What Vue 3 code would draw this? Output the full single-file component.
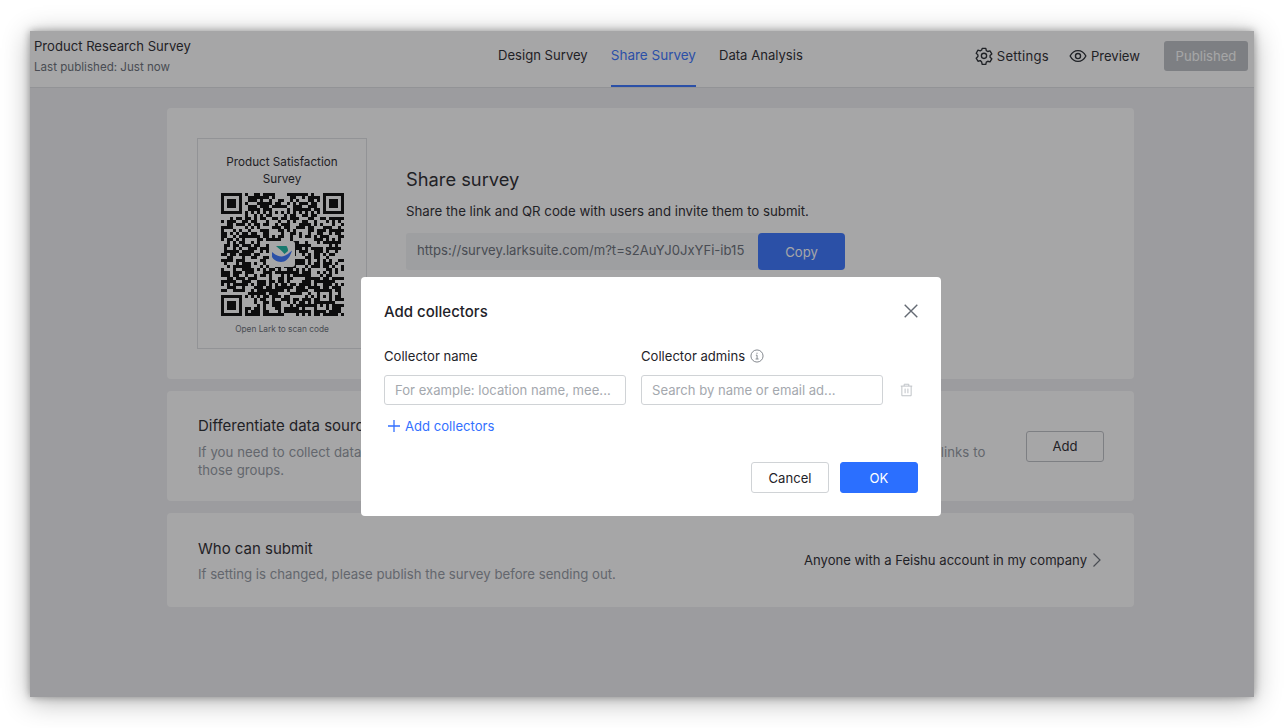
<script setup>
import { computed } from 'vue'

const tabs = ['Design Survey', 'Share Survey', 'Data Analysis']
const SIZE = 41

function isFinder(x, y) {
  const inBox = (bx, by) => x >= bx && x < bx + 8 && y >= by && y < by + 8
  return inBox(0, 0) || inBox(SIZE - 8, 0) || inBox(0, SIZE - 8)
}

// not a real encoding, just modules that look like the code in the picture
const qrPath = computed(() => {
  let seed = 20240611
  const next = () => {
    seed = (seed * 1664525 + 1013904223) % 4294967296
    return seed / 4294967296
  }
  let d = ''
  const add = (x, y, w = 1, h = 1) => {
    d += `M${x} ${y}h${w}v${h}h-${w}z`
  }
  for (let y = 0; y < SIZE; y++) {
    for (let x = 0; x < SIZE; x++) {
      const random = next()
      if (isFinder(x, y)) continue
      if (x >= 32 && x <= 36 && y >= 32 && y <= 36) continue
      if (x === 6 || y === 6) {
        if ((x + y) % 2 === 0) add(x, y)
      } else if (random > 0.44) {
        add(x, y)
      }
    }
  }
  return d
})

const finders = [
  [0, 0],
  [34, 0],
  [0, 34]
]
</script>

<template>
  <div class="desktop">
    <div class="window">
      <header class="topbar">
        <div class="doc">
          <div class="doc__title">Product Research Survey</div>
          <div class="doc__meta">Last published: Just now</div>
        </div>
        <nav class="tabs">
          <span
            v-for="tab in tabs"
            :key="tab"
            class="tab"
            :class="{ 'tab--active': tab === 'Share Survey' }"
          >{{ tab }}</span>
        </nav>
        <div class="tools">
          <span class="tool tool--settings">
            <svg width="18" height="18" viewBox="0 0 24 24" fill="none" stroke="currentColor" stroke-width="1.8" stroke-linejoin="round">
              <path d="M9.6 1.8h4.8l.7 3.1 1.9 1.1 3-.9 2.4 4.1-2.3 2.2v2.2l2.3 2.2-2.4 4.1-3-.9-1.9 1.1-.7 3.1H9.6l-.7-3.1L7 18.1l-3 .9-2.4-4.1 2.3-2.2v-2.2L1.6 8.3 4 4.2l3 .9 1.9-1.1z" />
              <circle cx="12" cy="11.8" r="3.5" />
            </svg>
            Settings
          </span>
          <span class="tool tool--preview">
            <svg width="18" height="18" viewBox="0 0 24 24" fill="none" stroke="currentColor" stroke-width="1.8">
              <path d="M1.5 12C4 7.2 7.6 4.8 12 4.8s8 2.4 10.5 7.2c-2.5 4.8-6.1 7.2-10.5 7.2S4 16.8 1.5 12z" />
              <circle cx="12" cy="12" r="3.4" />
            </svg>
            Preview
          </span>
          <button type="button" class="published">Published</button>
        </div>
      </header>

      <main class="content">
        <section class="card card--share">
          <div class="qr-card">
            <div class="qr-card__title">Product Satisfaction Survey</div>
            <div class="qr">
              <svg width="123" height="123" viewBox="0 0 41 41" shape-rendering="crispEdges">
                <path :d="qrPath" fill="#000" />
                <g v-for="[x, y] in finders" :key="`${x}-${y}`">
                  <path :d="`M${x} ${y}h7v7h-7zM${x + 1} ${y + 1}v5h5v-5z`" fill="#000" fill-rule="evenodd" />
                  <rect :x="x + 2" :y="y + 2" width="3" height="3" fill="#000" />
                </g>
                <path d="M32 32h5v5h-5zM33 33v3h3v-3z" fill="#000" fill-rule="evenodd" />
                <rect x="34" y="34" width="1" height="1" fill="#000" />
              </svg>
              <span class="qr__logo">
                <svg width="20" height="18" viewBox="0 0 20 18">
                  <path d="M4 1h10.5c1 1.500 1.500 3 1.500 5l-3.500 3C10 6 7 3.500 4 1z" fill="#12b5a0" />
                  <path d="M0 7c3 2.500 6 4.500 9.500 4.500 3.500 0 6.500-2.500 10.500-6-1.500 6-5.500 11.500-11 11.500C4.500 17 1 14 0 12z" fill="#3370ff" />
                </svg>
              </span>
            </div>
            <div class="qr-card__hint">Open Lark to scan code</div>
          </div>
          <div class="share">
            <h2 class="share__title">Share survey</h2>
            <p class="share__text">Share the link and QR code with users and invite them to submit.</p>
            <div class="share__link">
              <span class="share__url">https://survey.larksuite.com/m?t=s2AuYJ0JxYFi-ib15</span>
              <button type="button" class="copy">Copy</button>
            </div>
          </div>
        </section>

        <section class="card card--row card--sources">
          <div class="row-text">
            <div class="row-title">Differentiate data sources</div>
            <div class="row-desc">If you need to collect data from different groups or channels, you can create multiple collectors and send out different links to those groups.</div>
          </div>
          <button type="button" class="add">Add</button>
        </section>

        <section class="card card--row card--submit">
          <div>
            <div class="row-title">Who can submit</div>
            <div class="row-desc">If setting is changed, please publish the survey before sending out.</div>
          </div>
          <div class="scope">
            Anyone with a Feishu account in my company
            <svg width="10" height="16" viewBox="0 0 10 16" fill="none" stroke="#646a73" stroke-width="1.2">
              <path d="M1.500 1.500 8 8l-6.500 6.500" />
            </svg>
          </div>
        </section>
      </main>

      <div class="overlay">
        <div class="modal" role="dialog" aria-modal="true">
          <div class="modal__head">
            <h3 class="modal__title">Add collectors</h3>
            <svg class="modal__close" width="14" height="14" viewBox="0 0 14 14" fill="none" stroke="currentColor" stroke-width="1.4">
              <path d="M.7.7l12.600 12.600M13.300.7.7 13.300" />
            </svg>
          </div>
          <div class="fields">
            <label class="field">
              <span class="field__label">Collector name</span>
              <input class="field__input" type="text" placeholder="For example: location name, mee...">
            </label>
            <label class="field">
              <span class="field__label">
                Collector admins
                <svg width="14" height="14" viewBox="0 0 15 15" fill="none" stroke="#7b8087" stroke-width="1">
                  <circle cx="7.500" cy="7.500" r="6.500" />
                  <path d="M6.300 6.600h1.300v4M6 10.700h3.200M7.500 4v1.200" />
                </svg>
              </span>
              <input class="field__input" type="text" placeholder="Search by name or email ad...">
            </label>
            <svg class="fields__trash" width="13" height="14" viewBox="0 0 14 14" fill="none" stroke="#bbbfc4" stroke-width="1">
              <path d="M.8 2.800h12.400M4.500 2.800V.8h5v2M2 2.800v10.400h10V2.800M5.500 5.500v5M8.500 5.500v5" />
            </svg>
          </div>
          <div class="add-more">
            <svg width="12" height="12" viewBox="0 0 12 12" fill="none" stroke="currentColor" stroke-width="1.3">
              <path d="M6 0v12M0 6h12" />
            </svg>
            Add collectors
          </div>
          <div class="modal__foot">
            <button type="button" class="btn">Cancel</button>
            <button type="button" class="btn btn--primary">OK</button>
          </div>
        </div>
      </div>
    </div>
  </div>
</template>

<style>
body {
  background: #fff;
}
</style>

<style scoped>
.desktop {
  height: 728px;
  padding: 31px 30px;
  box-sizing: border-box;
  overflow: hidden;
  background: #fff;
  font-family: Inter, "Noto Sans", sans-serif;
  font-size: 13.1px;
  color: #1f2329;
}

.window {
  position: relative;
  height: 666px;
  overflow: hidden;
  background: #efeff2;
}

.desktop::before {
  content: "";
  position: absolute;
  top: 31px;
  left: 30px;
  width: 1224px;
  height: 666px;
  box-shadow: 0 0 8px rgba(0, 0, 0, 0.35), 0 4px 26px rgba(0, 0, 0, 0.3);
}

.topbar {
  position: relative;
  display: flex;
  align-items: center;
  box-sizing: border-box;
  height: 57px;
  padding: 0 6px 6px 4px;
  border-bottom: 1px solid #dee0e3;
  background: #fff;
}

.doc__title {
  line-height: 20px;
}

.doc__meta {
  margin-top: 2px;
  font-size: 11.6px;
  line-height: 18px;
  color: #646a73;
}

.tabs {
  position: absolute;
  top: 0;
  left: 468px;
  display: flex;
  gap: 23px;
  height: 56px;
}

.tab {
  box-sizing: border-box;
  height: 56px;
  padding-top: 14px;
  line-height: 20px;
}

.tab--active {
  border-bottom: 2px solid #3370ff;
  color: #3370ff;
  font-size: 13.5px;
}

.tools {
  display: flex;
  align-items: center;
  margin-left: auto;
}

.tool {
  display: flex;
  align-items: center;
  gap: 4px;
  margin-right: 20px;
  line-height: 20px;
}

.tool--settings {
  letter-spacing: 0.25px;
}

.tool--preview {
  margin-right: 24px;
}

.published {
  width: 84px;
  height: 30px;
  padding: 0;
  border: 0;
  border-radius: 3px;
  background: #bbbfc4;
  color: #fff;
  font: inherit;
}

.content {
  display: flex;
  flex-direction: column;
  gap: 12px;
  padding: 20px 120px 0 137px;
}

.card {
  border-radius: 4px;
  background: #fff;
}

.card--share {
  display: flex;
  align-items: center;
  height: 271px;
  padding: 0 30px;
  box-sizing: border-box;
}

.qr-card {
  display: flex;
  flex-direction: column;
  align-items: center;
  box-sizing: border-box;
  width: 170px;
  height: 211px;
  padding-top: 15px;
  border: 1px solid #dee0e3;
}

.qr-card__title {
  width: 130px;
  font-size: 11.7px;
  line-height: 16.5px;
  text-align: center;
}

.qr {
  position: relative;
  width: 123px;
  height: 123px;
  margin-top: 6px;
}

.qr svg {
  display: block;
}

.qr__logo {
  position: absolute;
  top: 48px;
  left: 48px;
  display: flex;
  align-items: center;
  justify-content: center;
  width: 26px;
  height: 26px;
  border-radius: 3px;
  background: #fff;
}

.qr-card__hint {
  margin-top: 7px;
  font-size: 8.3px;
  line-height: 12px;
  color: #646a73;
}

.share {
  align-self: flex-start;
  margin: 58px 0 0 39px;
}

.share__title {
  margin: 0;
  font-size: 18.3px;
  font-weight: 400;
  line-height: 26px;
}

.share__text {
  margin: 9px 0 0;
  font-size: 13.25px;
  line-height: 20px;
}

.share__link {
  display: flex;
  align-items: center;
  width: 439px;
  height: 37px;
  margin-top: 12px;
  border-radius: 3px;
  background: #f2f3f5;
}

.share__url {
  flex: 1;
  padding: 0 0 4px 11px;
  color: #646a73;
  white-space: nowrap;
}

.copy {
  width: 87px;
  height: 37px;
  padding: 0;
  border: 0;
  border-radius: 4px;
  background: #3370ff;
  color: #fff;
  font: inherit;
}

.card--row {
  display: flex;
  align-items: center;
  justify-content: space-between;
  box-sizing: border-box;
  padding: 0 30px 0 31px;
}

.card--sources {
  height: 110px;
}

.card--submit {
  height: 94px;
  padding-right: 32px;
}

.row-text {
  width: 790px;
  padding-top: 1px;
}

.row-title {
  font-size: 15px;
  line-height: 22px;
}

.row-desc {
  margin-top: 5px;
  font-size: 13.2px;
  line-height: 18px;
  color: #8f959e;
}

.card--sources .row-desc {
  margin-top: 6px;
  word-spacing: 0.3px;
}

.add {
  width: 78px;
  height: 31px;
  padding: 0;
  border: 1px solid #bbbfc4;
  border-radius: 3px;
  background: #fff;
  color: #1f2329;
  font: inherit;
}

.scope {
  display: flex;
  align-items: center;
  gap: 5px;
  line-height: 20px;
}

.overlay {
  position: absolute;
  inset: 0;
  padding: 246px 0 0 331px;
  background: rgba(32, 32, 36, 0.4);
}

.modal {
  box-sizing: border-box;
  width: 580px;
  height: 239px;
  padding: 24px 23px;
  border-radius: 4px;
  background: #fff;
}

.modal__head {
  display: flex;
  align-items: center;
  justify-content: space-between;
  height: 22px;
}

.modal__title {
  margin: 0;
  font-size: 15px;
  font-weight: 500;
  line-height: 22px;
}

.modal__close {
  margin-top: -2px;
  color: #646a73;
}

.fields {
  display: flex;
  align-items: flex-end;
  gap: 15.5px;
  margin-top: 23px;
}

.field {
  display: flex;
  flex-direction: column;
  width: 241.5px;
}

.field__label {
  display: flex;
  align-items: center;
  gap: 5px;
  height: 20px;
  margin-bottom: 9px;
  line-height: 20px;
}

.field__input {
  box-sizing: border-box;
  width: 100%;
  height: 30px;
  padding: 0 10px;
  border: 1px solid #d0d3d6;
  border-radius: 3px;
  outline: 0;
  background: #fff;
  color: #1f2329;
  font: inherit;
}

.field__input::placeholder {
  color: #a4a8ae;
  opacity: 1;
}

.fields__trash {
  margin: 0 0 8px 2px;
}

.add-more {
  display: flex;
  align-items: center;
  gap: 5px;
  margin: 11px 0 0 4px;
  line-height: 20px;
  color: #3370ff;
}

.modal__foot {
  display: flex;
  justify-content: flex-end;
  gap: 11px;
  margin-top: 26px;
}

.btn {
  width: 78px;
  height: 31px;
  padding: 0;
  border: 1px solid #d0d3d6;
  border-radius: 3px;
  background: #fff;
  color: #1f2329;
  font: inherit;
}

.btn--primary {
  border-color: #2b6fff;
  background: #2b6fff;
  color: #fff;
}
</style>
